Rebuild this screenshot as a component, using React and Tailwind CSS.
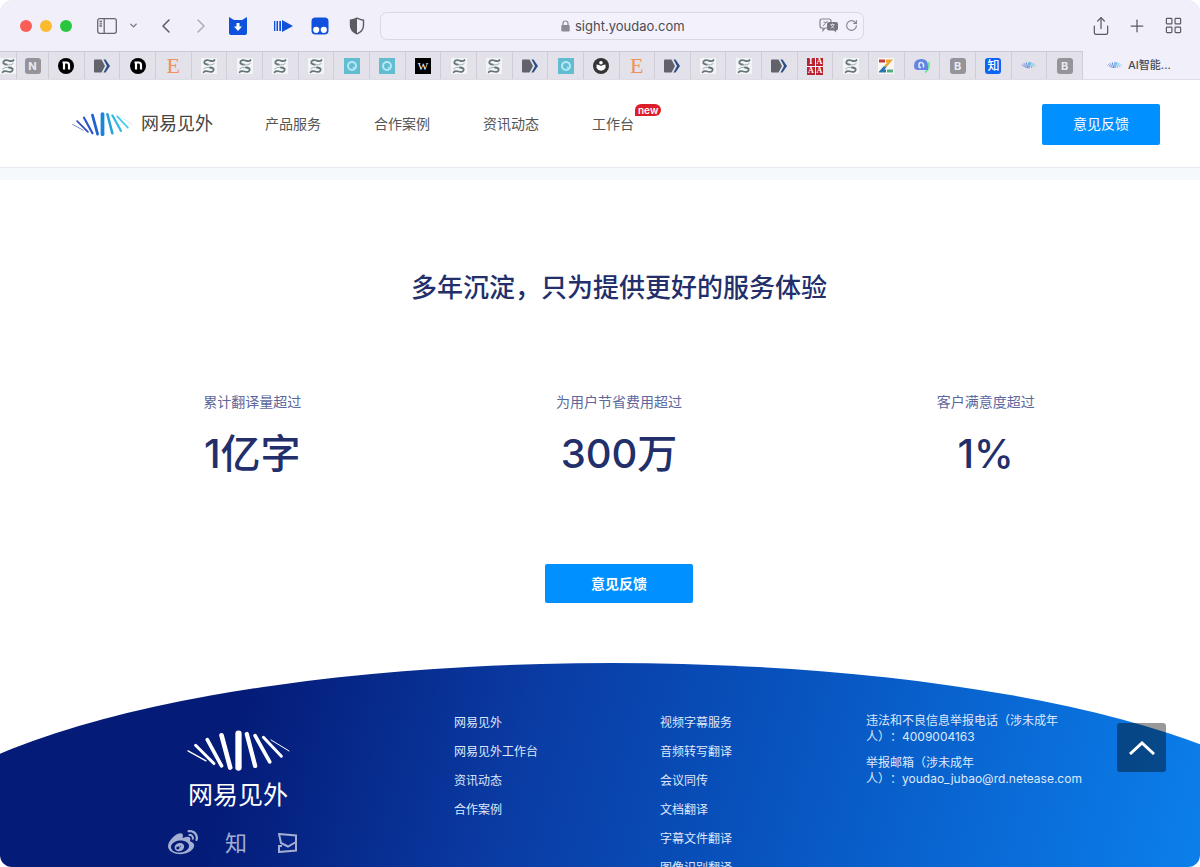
import { FaWeibo } from "react-icons/fa";
import {
  ChevronDown,
  ChevronLeft,
  ChevronRight,
  LayoutGrid,
  Plus,
  RotateCw,
  Share,
} from "lucide-react";

const rays = [
  { d: "M143 153L197 183", width: 4, color: "#5668c8" },
  { d: "M166 136L221 191", width: 9, color: "#3552bd" },
  { d: "M201 119L244 198", width: 11, color: "#2a56c8" },
  { d: "M244 106L270 203", width: 14, color: "#1f62d2" },
  { d: "M295 101V203", width: 19, color: "#1a84dd" },
  { d: "M320 102L345 198", width: 13, color: "#25a2da" },
  { d: "M345 107L389 186", width: 11, color: "#33b8de" },
  { d: "M370 112L424 169", width: 9, color: "#45cbe8" },
  { d: "M393 120L447 153", width: 3, color: "#9fe2f2" },
];

const SightLogo = ({ white, className }) => (
  <svg viewBox="140 90 310 124" className={className} aria-hidden="true">
    {rays.map((ray) => (
      <path
        key={ray.d}
        d={ray.d}
        stroke={white ? "#fff" : ray.color}
        strokeWidth={ray.width}
        strokeLinecap="round"
      />
    ))}
  </svg>
);

const Swirl = () => (
  <svg viewBox="0 0 16 16" className="size-4 flex-none bg-[#f3f4f6]" fill="none" stroke="#66757c" strokeLinecap="round">
    <path d="M13.500 2C12.500 3.800 11 3.300 8.500 2.500C5.500 1.500 3.300 2.700 3.300 4.500C3.300 6 5 6.500 7 6.700" strokeWidth="1.800" />
    <path d="M7 6.700C9.500 7 11.500 7 13.200 5.500M2.800 10.800C4.500 9.200 7 9.300 9 9.500" strokeWidth="0.900" stroke="#98a3a8" />
    <path d="M9 9.500C11.500 9.700 12.700 10.300 12.700 11.600C12.700 13.500 10.500 14.400 7.500 13.500C5 12.700 3.800 12.700 2.600 14.200" strokeWidth="1.800" />
  </svg>
);

const Tag = () => (
  <svg viewBox="0 0 16 16" className="size-4">
    <path d="M0 2.500Q0 1.500 1 1.500H7.500L11 8L7.500 14.500H1Q0 14.500 0 13.500Z" fill="#62636a" />
    <path d="M9.500 1.500H11.500L16 8L11.500 14.500H9.500L13 8Z" fill="#2a4e85" />
  </svg>
);

const Ring = () => (
  <svg viewBox="0 0 16 16" className="size-4 bg-[#62bdd0]" fill="none">
    <circle cx="8" cy="8" r="4" stroke="#b5e9f5" strokeWidth="2" />
    <path d="M9 9L11 11" stroke="#b5e9f5" strokeWidth="1.500" />
  </svg>
);

const Letter = ({ children }) => (
  <span className="flex size-4 items-center justify-center rounded-[3px] bg-[#95949b] text-[11px] leading-4 font-bold text-[#ecebf2]">
    {children}
  </span>
);

const RoundN = () => (
  <svg viewBox="0 0 16 16" className="size-4">
    <circle cx="8" cy="8" r="8" fill="#000" />
    <path d="M4.500 4.500H8.500Q11 4.500 11 7V11.500M6 4.500V11.500" stroke="#fff" strokeWidth="2.200" fill="none" />
  </svg>
);

const Etsy = () => (
  <span className="font-['Liberation_Serif',serif] text-[22px] leading-4 text-[#f0905a]">E</span>
);

const Wiki = () => (
  <span className="flex size-4 items-center justify-center bg-black font-['Liberation_Serif',serif] text-[11px] leading-4 text-white">
    W
  </span>
);

const Reader = () => (
  <svg viewBox="0 0 16 16" className="size-4">
    <circle cx="8" cy="8" r="8" fill="#343434" />
    <circle cx="8" cy="4.800" r="1.800" fill="#fff" />
    <path d="M3.500 6.500Q6.500 6.500 8 8Q9.500 6.500 12.500 6.500V10Q11 12.500 8 12.800Q5 12.500 3.500 10Z" fill="#fff" />
  </svg>
);

const Blocks = () => (
  <span className="grid size-4 grid-cols-2 gap-px bg-white font-['Liberation_Serif',serif] text-[8px] leading-[8px] font-bold text-white">
    {["I", "A", "A", "A"].map((letter, i) => (
      <span key={i} className="bg-[#b92330] text-center">
        {letter}
      </span>
    ))}
  </span>
);

const Zed = () => (
  <svg viewBox="0 0 16 16" className="size-4 bg-[#f8f7f5]">
    <path d="M1 1.500H7V4.500H1Z" fill="#c63b36" />
    <path d="M8 1.500H15L9 8.500H5.500L9.500 4.500H8Z" fill="#eda52f" />
    <path d="M5.500 8.500H9L6.500 11.500H8V14.500H1V13.500Z" fill="#2876ae" />
    <path d="M9 11.500H15V14.500H9Z" fill="#4fae7d" />
  </svg>
);

const Qiu = () => (
  <svg viewBox="0 0 16 16" className="size-4" fill="none">
    <path d="M14.500 4Q16.500 10 11 14.500" stroke="#6fe6a4" strokeWidth="2" />
    <path d="M0 8Q0 1 7.500 1Q14 1 14 8V12H4Q0 12 0 8Z" fill="#6484e2" />
    <path d="M5 9.500V6.500Q5 4.500 7 4.500T9.500 6.500V9.500M5 9.500H7" stroke="#e8ecff" strokeWidth="1.500" />
  </svg>
);

const Zhihu = () => (
  <span className="flex size-4 items-center justify-center rounded-[3px] bg-[#0a64f5] text-[12px] leading-4 font-medium text-white">
    知
  </span>
);

const SmallLogo = () => <SightLogo className="w-4" />;

const pinnedTabs = [
  RoundN, Tag, RoundN, Etsy, Swirl, Swirl, Swirl, Swirl, Ring, Ring, Wiki,
  Swirl, Swirl, Tag, Ring, Reader, Etsy, Tag, Swirl, Swirl, Tag, Blocks,
  Swirl, Zed, Qiu, "B", Zhihu, SmallLogo, "B",
];

const IconButton = ({ label, className, children }) => (
  <button type="button" aria-label={label} className={`flex items-center justify-center ${className}`}>
    {children}
  </button>
);

const Toolbar = () => (
  <div className="grid h-[51px] grid-cols-[380px_minmax(0,484px)_1fr] items-center">
    <div className="flex items-center pl-5">
      <div className="flex gap-2">
        <span className="size-3 rounded-full bg-[#fb5d57]" />
        <span className="size-3 rounded-full bg-[#fcbb2f]" />
        <span className="size-3 rounded-full bg-[#29c740]" />
      </div>
      <IconButton label="Sidebar" className="ml-[25px] w-5">
        <svg viewBox="0 0 20 16" className="w-5" fill="none" stroke="#68676f" strokeWidth="1.300">
          <rect x="0.700" y="0.700" width="18.600" height="14.600" rx="2" />
          <path d="M7.200 1V15M2.500 3.500H5M2.500 5.800H5M2.500 8H5" />
        </svg>
      </IconButton>
      <IconButton label="Tab groups" className="ml-[10px] w-3">
        <ChevronDown size={11} strokeWidth={3} color="#77767e" />
      </IconButton>
      <IconButton label="Back" className="ml-[15px] w-6">
        <ChevronLeft size={24} strokeWidth={1.5} color="#5c5b62" />
      </IconButton>
      <IconButton label="Forward" className="ml-[11px] w-6">
        <ChevronRight size={24} strokeWidth={1.5} color="#aeadb5" />
      </IconButton>
      <IconButton label="Downloader" className="ml-4 w-[18px]">
        <svg viewBox="0 0 18 18" className="w-[18px]">
          <path d="M0 0L5 3H13L18 0V16Q18 18 16 18H2Q0 18 0 16Z" fill="#0f50dd" />
          <path d="M7.500 6H10.500V9.500H13L9 14L5 9.500H7.500Z" fill="#fff" />
        </svg>
      </IconButton>
      <IconButton label="Playback speed" className="ml-[27px] w-[19px]">
        <svg viewBox="0 0 19 12" className="w-[19px]" fill="#0f50dd">
          <path d="M0 1H1.300V11H0ZM2.500 1H4V11H2.500ZM5.300 1H7V11H5.300ZM8 0L19 6L8 12Z" />
        </svg>
      </IconButton>
      <IconButton label="Scripts" className="ml-[18px] w-[18px]">
        <svg viewBox="0 0 18 18" className="w-[18px]">
          <rect x="0.500" y="0.500" width="17" height="17" rx="4" fill="#0f50dd" />
          <circle cx="5.200" cy="12.800" r="3.100" fill="#fff" />
          <circle cx="12.800" cy="12.800" r="3.100" fill="#fff" />
        </svg>
      </IconButton>
      <IconButton label="Privacy report" className="ml-5 w-4">
        <svg viewBox="0 0 16 18" className="w-4">
          <path d="M8 1.200Q11 2.800 14.500 3.200V8.500Q14.500 14 8 16.800Q1.500 14 1.500 8.500V3.200Q5 2.800 8 1.200Z" fill="none" stroke="#5c5b62" strokeWidth="1.400" />
          <path d="M8 1.200V16.800Q1.500 14 1.500 8.500V3.200Q5 2.800 8 1.200Z" fill="#5c5b62" />
        </svg>
      </IconButton>
    </div>

    <div className="flex h-7 items-center rounded-[7px] border border-[#dad8e1] bg-[#f3f1fb] pr-1">
      <span className="w-12" />
      <div className="flex flex-1 items-center justify-center gap-[5px]">
        <svg viewBox="0 0 9 12" className="w-[9px]">
          <rect x="0.300" y="5" width="8.400" height="6.500" rx="1" fill="#8d8c94" />
          <path d="M2 5.500V3.500Q2 1 4.500 1T7 3.500V5.500" fill="none" stroke="#8d8c94" strokeWidth="1.200" />
        </svg>
        <input
          aria-label="Address"
          defaultValue="sight.youdao.com"
          className="w-28 bg-transparent text-[13px] leading-5 text-[#4d4c53] outline-none"
        />
      </div>
      <IconButton label="Translate" className="w-5">
        <svg viewBox="0 0 20 15" className="w-5">
          <path d="M3 1H10Q12 1 12 3V8Q12 10 10 10H6L4 12.500V10H3Q1 10 1 8V3Q1 1 3 1Z" fill="none" stroke="#85848c" strokeWidth="1.200" />
          <path d="M4 8L8.500 3M4.500 4L7.500 4.500" stroke="#85848c" />
          <path d="M10 4H17Q19 4 19 6V10.500Q19 12.500 17 12.500V14.500L15 12.500H10Q8 12.500 8 10.500V6Q8 4 10 4Z" fill="#77767e" />
          <path d="M11.500 6.500H15.500M13.500 5.500V6.500M12 10.500L15 7M12 7L15 10.500" stroke="#dddbe4" strokeWidth="0.900" />
        </svg>
      </IconButton>
      <IconButton label="Reload" className="ml-1 w-4">
        <RotateCw size={13} strokeWidth={2} color="#85848c" />
      </IconButton>
    </div>

    <div className="flex items-center justify-end gap-4 pr-[17px]">
      <IconButton label="Share" className="w-5">
        <Share size={20} strokeWidth={1.5} color="#5c5b62" />
      </IconButton>
      <IconButton label="New tab" className="w-5">
        <Plus size={20} strokeWidth={1.5} color="#5c5b62" />
      </IconButton>
      <IconButton label="Tab overview" className="w-5">
        <LayoutGrid size={19} strokeWidth={1.5} color="#5c5b62" />
      </IconButton>
    </div>
  </div>
);

const TabBar = () => (
  <div className="flex h-7">
    <div className="flex min-w-0 flex-1 overflow-hidden border-t border-[#c9c7d1] bg-[#e3e1e9]">
      <span className="flex w-4 flex-none items-center justify-end">
        <Swirl />
      </span>
      <span className="flex w-8 flex-none items-center justify-center border-l border-[#cfcdd6]">
        <Letter>N</Letter>
      </span>
      {pinnedTabs.map((Icon, i) => (
        <span key={i} className="flex min-w-0 flex-1 items-center justify-center border-l border-[#cfcdd6]">
          {Icon === "B" ? <Letter>B</Letter> : <Icon />}
        </span>
      ))}
    </div>
    <div className="flex w-[118px] flex-none items-center gap-[5px] border-l border-[#cfcdd6] pl-6 text-[11px] leading-4 font-medium text-[#4d4c53]">
      <SightLogo className="w-4" />
      AI智能...
    </div>
  </div>
);

const navItems = ["产品服务", "合作案例", "资讯动态", "工作台"];

const Header = () => (
  <header className="flex h-22 flex-none items-center border-b border-[#e6ebf2] pt-px pr-10 pl-[72px]">
    <a href="#" className="flex items-center gap-2 text-[18px] leading-6 text-[#444]">
      <SightLogo className="w-[61px]" />
      网易见外
    </a>
    <nav className="ml-[52px] flex gap-[53px] text-[14px] leading-5 text-[#555]">
      {navItems.map((item) => (
        <a key={item} href="#" className="relative">
          {item}
          {item === "工作台" && (
            <span className="absolute -top-[10px] left-full ml-px rounded-[6px] rounded-bl-none bg-[#dc1e28] px-[3px] text-[10px] leading-3 font-semibold text-white">
              new
            </span>
          )}
        </a>
      ))}
    </nav>
    <button type="button" className="ml-auto h-[41px] w-[118px] rounded-[2px] bg-[#0090ff] text-[14px] leading-5 text-white">
      意见反馈
    </button>
  </header>
);

const stats = [
  { label: "累计翻译量超过", value: "1亿字" },
  { label: "为用户节省费用超过", value: "300万" },
  { label: "客户满意度超过", value: "1%" },
];

const Stats = () => (
  <main className="flex flex-none flex-col items-center pt-[90px] pr-[31px] pl-[69px] text-[#222f6b]">
    <h1 className="text-[26px] leading-9 font-medium">多年沉淀，只为提供更好的服务体验</h1>
    <dl className="mt-[86px] grid w-full grid-cols-3 text-center">
      {stats.map(({ label, value }) => (
        <div key={label}>
          <dt className="text-[14px] leading-5 text-[#5d679c]">{label}</dt>
          <dd className="mt-[18px] text-[40px] leading-12 font-medium">{value}</dd>
        </div>
      ))}
    </dl>
    <button type="button" className="mt-[86px] h-[39px] w-[148px] rounded-[2px] bg-[#0090ff] text-[14px] leading-5 font-bold text-white">
      意见反馈
    </button>
  </main>
);

const siteLinks = ["网易见外", "网易见外工作台", "资讯动态", "合作案例"];
const serviceLinks = ["视频字幕服务", "音频转写翻译", "会议同传", "文档翻译", "字幕文件翻译", "图像识别翻译"];

const LinkColumn = ({ links }) => (
  <ul className="leading-[29px]">
    {links.map((link) => (
      <li key={link}>
        <a href="#">{link}</a>
      </li>
    ))}
  </ul>
);

const Footer = () => (
  <footer className="mt-[60px] grid min-h-0 flex-1 overflow-hidden">
    <div className="col-start-1 row-start-1 -ml-[9%] w-[120%] [border-radius:50%_50%_0_0/192px_192px_0_0] bg-[linear-gradient(105deg,#041b78_24%,#0a3ca4_44%,#0852bd_60%,#0b7eea_90%)]" />
    <div className="col-start-1 row-start-1 grid grid-cols-[286px_206px_206px_1fr] pt-[45px] pl-[168px] text-[12px] text-[#dfe8fa]">
      <div className="flex w-[140px] flex-col items-center pt-[22px]">
        <SightLogo white className="w-[103px]" />
        <span className="mt-2 text-[25px] leading-8 text-white">网易见外</span>
        <div className="mt-4 flex items-center gap-[27px] self-start text-[#a4aed3]">
          <a href="#" aria-label="微博">
            <FaWeibo size={30} />
          </a>
          <a href="#" className="text-[22px] leading-8">
            知
          </a>
          <a href="#" aria-label="邮箱" className="ml-1">
            <svg viewBox="0 0 20 20" className="w-5" fill="none" stroke="currentColor" strokeWidth="2">
              <path d="M1 1L18 2.500V9L10 13.500L3 10L1 1ZM18 9V17.500L1 19V13H4" />
            </svg>
          </a>
        </div>
      </div>
      <LinkColumn links={siteLinks} />
      <LinkColumn links={serviceLinks} />
      <div className="flex w-60 flex-col gap-[10px] pt-[5px] leading-4 [text-spacing-trim:space-all]">
        <p>
          违法和不良信息举报电话（涉未成年
          <br />
          人）：4009004163
        </p>
        <p>
          举报邮箱（涉未成年
          <br />
          人）：youdao_jubao@rd.netease.com
        </p>
      </div>
    </div>
  </footer>
);

export default function App() {
  return (
    <div className="relative flex h-screen flex-col overflow-hidden rounded-[12px] bg-white font-['Inter','Noto_Sans_CJK_SC',sans-serif]">
      <div className="flex-none border-b border-[#dedce5] bg-[#f1effa]">
        <Toolbar />
        <TabBar />
      </div>
      <Header />
      <div className="h-3 flex-none bg-[#f6f9fc]" />
      <Stats />
      <Footer />
      <button
        type="button"
        aria-label="返回顶部"
        className="absolute right-[34px] bottom-[95px] flex size-[49px] items-center justify-center rounded-[3px] bg-black/40"
      >
        <svg viewBox="0 0 26 14" className="w-[26px]" fill="none" stroke="#fff" strokeWidth="3">
          <path d="M1 13L13 2L25 13" />
        </svg>
      </button>
    </div>
  );
}
